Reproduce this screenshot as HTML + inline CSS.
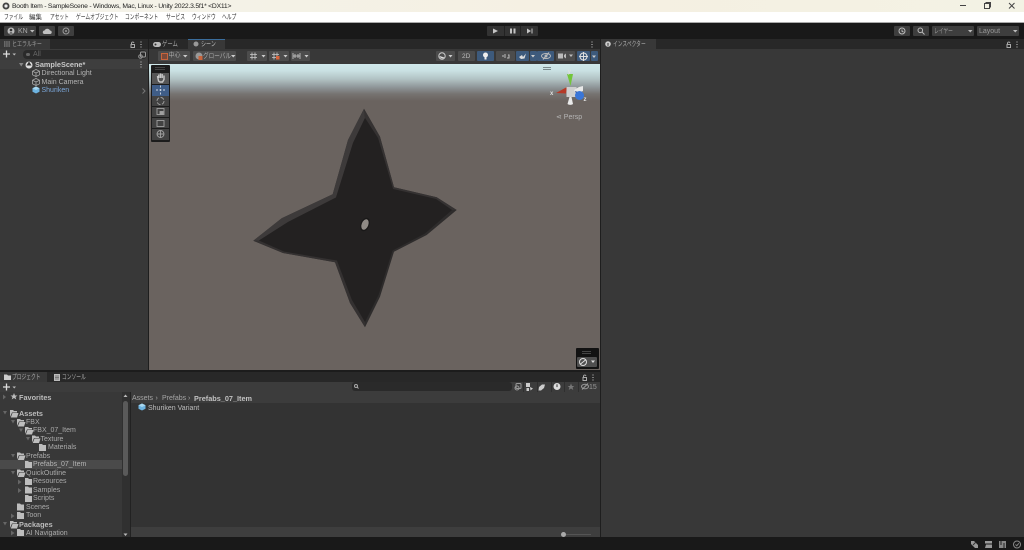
<!DOCTYPE html>
<html><head><meta charset="utf-8">
<style>
html,body{margin:0;padding:0;background:#191919;}
#p{position:relative;width:1024px;height:550px;overflow:hidden;background:#191919;font-family:"Liberation Sans","Noto Sans CJK JP",sans-serif;font-size:7px;color:#c0c0c0;filter:blur(.3px);}
#p div{position:absolute;box-sizing:border-box;}
.t{white-space:nowrap;line-height:9px;height:9px;}
.k{font-size:7px;transform:scaleX(.68);transform-origin:left center;}
.m{color:#333;top:12.500px;}
.b{background:#3e3e3e;border-radius:1px;}
.bl{background:#3d5a7c;border-radius:1px;}
.g{background:#4c4c4c;border-radius:1px;}
svg{position:absolute;overflow:visible;}
</style></head><body>
<div id="p">
<!-- title -->
<div style="left:0;top:0;width:1024px;height:12px;background:linear-gradient(90deg,#f4f3ea,#f5f0e2 60%,#f3f2e4);"></div>
<div class="t" style="left:12px;top:2px;color:#222;font-size:6.800px;letter-spacing:-.23px;">Booth Item - SampleScene - Windows, Mac, Linux - Unity 2022.3.5f1* &lt;DX11&gt;</div>
<svg style="left:2px;top:2px" width="8" height="8"><circle cx="4" cy="4" r="3.500" fill="#444"/><circle cx="4" cy="4" r="1.600" fill="#eee"/></svg>
<svg style="left:955px;top:0" width="69" height="12" stroke="#444" fill="none"><path d="M5 5.500H11"/><path d="M29.500 3.500H34.500V8.500H29.500ZM31 3.500V2.500H35.500V7H34.500"/><path d="M54 3L59.500 8.500M59.500 3L54 8.500"/></svg>
<!-- menu -->
<div style="left:0;top:12px;width:1024px;height:10px;background:#fff;"></div>
<div class="t k m" style="left:4px;">ファイル</div>
<div class="t m" style="left:29px;font-size:6.500px;">編集</div>
<div class="t k m" style="left:50px;">アセット</div>
<div class="t k m" style="left:76px;">ゲームオブジェクト</div>
<div class="t k m" style="left:125px;">コンポーネント</div>
<div class="t k m" style="left:166px;">サービス</div>
<div class="t k m" style="left:192px;">ウィンドウ</div>
<div class="t k m" style="left:222px;">ヘルプ</div>
<div style="left:0;top:22px;width:1024px;height:1px;background:#aaa;"></div>
<!-- toolbar -->
<div style="left:0;top:23px;width:1024px;height:16px;background:#191919;"></div>
<div class="b" style="left:4px;top:26px;width:32px;height:10px;"></div>
<svg style="left:7px;top:27px" width="8" height="8"><circle cx="4" cy="4" r="3.500" fill="#bbb"/><circle cx="4" cy="3" r="1.300" fill="#333"/><path d="M2 6.500Q4 4 6 6.500" fill="#333"/></svg>
<div class="t" style="left:18px;top:26.500px;font-size:7px;color:#aaa;">KN</div>
<svg style="left:30px;top:30px" width="5" height="3"><path d="M0 0H4.500L2.250 2.500Z" fill="#bbb"/></svg>
<div class="b" style="left:39px;top:26px;width:16px;height:10px;"></div>
<svg style="left:42px;top:28px" width="10" height="6"><path d="M2 6H8.500A1.800 1.800 0 0 0 8 2.500A3 3 0 0 0 2.500 2.500A1.800 1.800 0 0 0 2 6Z" fill="#c0c0c0"/></svg>
<div class="b" style="left:58px;top:26px;width:16px;height:10px;"></div>
<svg style="left:62px;top:27px" width="8" height="8"><circle cx="4" cy="4" r="3" fill="none" stroke="#999" stroke-width="1"/><circle cx="4" cy="4" r="1" fill="#999"/></svg>
<div class="b" style="left:487px;top:26px;width:51px;height:10px;background:#333;"></div>
<div style="left:504px;top:26px;width:1px;height:10px;background:#222;"></div>
<div style="left:520px;top:26px;width:1px;height:10px;background:#222;"></div>
<svg style="left:487px;top:26px" width="51" height="10" fill="#c4c4c4"><path d="M6 2.500L11 5L6 7.500Z"/><path d="M23 2.500H25V7.500H23ZM26.500 2.500H28.500V7.500H26.500Z"/><path d="M40 2.500L44 5L40 7.500ZM44.500 2.500H45.500V7.500H44.500Z"/></svg>
<div class="b" style="left:894px;top:26px;width:16px;height:10px;"></div>
<svg style="left:898px;top:27px" width="8" height="8"><circle cx="4" cy="4" r="3" fill="none" stroke="#bbb"/><path d="M4 2.500V4.300L5.500 5" stroke="#bbb" fill="none"/></svg>
<div class="b" style="left:913px;top:26px;width:16px;height:10px;"></div>
<svg style="left:917px;top:27px" width="8" height="8"><circle cx="3.300" cy="3.300" r="2.300" fill="none" stroke="#bbb"/><path d="M5 5L7.500 7.500" stroke="#bbb"/></svg>
<div class="b" style="left:932px;top:26px;width:42px;height:10px;"></div>
<div class="t k" style="left:934px;top:26.500px;color:#999;">レイヤー</div>
<svg style="left:968px;top:30px" width="5" height="3"><path d="M0 0H4.500L2.250 2.500Z" fill="#bbb"/></svg>
<div class="b" style="left:977px;top:26px;width:42px;height:10px;"></div>
<div class="t" style="left:979px;top:26.500px;color:#999;font-size:7px;">Layout</div>
<svg style="left:1013px;top:30px" width="5" height="3"><path d="M0 0H4.500L2.250 2.500Z" fill="#bbb"/></svg>

<!-- Hierarchy -->
<div style="left:0;top:39px;width:148px;height:331px;background:#383838;"></div>
<div style="left:148px;top:39px;width:1px;height:331px;background:#1e1e1e;"></div>
<div style="left:0;top:39px;width:148px;height:10px;background:#282828;"></div>
<div style="left:0;top:39px;width:50px;height:10px;background:#383838;"></div>
<svg style="left:4px;top:41px" width="7" height="6" stroke="#999"><path d="M0 1H6M0 3H6M0 5H6" stroke-dasharray="1.500 .7"/></svg>
<div class="t k" style="left:12px;top:39.500px;color:#999;transform:scaleX(.71);">ヒエラルキー</div>
<svg style="left:130px;top:41px" width="16" height="7"><path d="M1 3.500H4.500V6.500H1ZM1.500 3.500V2A1.300 1.300 0 0 1 4 2" fill="none" stroke="#aaa"/><path d="M11 .5V1.500M11 3V4M11 5.500V6.500" stroke="#ccc" stroke-width="1"/></svg>
<div style="left:0;top:49px;width:148px;height:11px;background:#3c3c3c;"></div>
<svg style="left:3px;top:50px" width="14" height="8"><path d="M0 4H7M3.500 .5V7.500" stroke="#ddd" stroke-width="1.300"/><path d="M9.500 3.500H13L11.250 5.500Z" fill="#bbb"/></svg>
<div style="left:23px;top:50px;width:124px;height:9px;background:#2a2a2a;border-radius:4px;"></div>
<div class="t" style="left:33px;top:50px;color:#666;">All</div>
<div style="left:26px;top:53px;width:4px;height:3px;background:#666;border-radius:2px;"></div>
<svg style="left:138px;top:50.500px" width="8" height="8" fill="none" stroke="#999"><rect x="2.500" y="1" width="5" height="5" rx="1"/><circle cx="2.500" cy="5.500" r="1.800"/></svg>
<div style="left:0;top:60px;width:148px;height:9px;background:#3e3e3e;"></div>
<svg style="left:19px;top:63px" width="5" height="4"><path d="M0 0H4.500L2.250 3.500Z" fill="#888"/></svg>
<svg style="left:25px;top:60.500px" width="8" height="8"><circle cx="4" cy="4" r="3.500" fill="#ddd"/><path d="M4 .5L6.500 4.500H1.500Z" fill="#333"/></svg>
<div class="t" style="left:35px;top:60px;font-weight:bold;color:#c8c8c8;font-size:7.300px;">SampleScene*</div>
<svg style="left:140px;top:61px" width="3" height="7"><path d="M1 .5V1.500M1 3V4M1 5.500V6.500" stroke="#ccc"/></svg>
<svg style="left:32px;top:69px" width="8" height="8" fill="none" stroke="#aaa" stroke-width=".8"><path d="M4 .5L7.500 2.200V5.800L4 7.500L.5 5.800V2.200ZM.5 2.200L4 4L7.500 2.200M4 4V7.500"/></svg>
<div class="t" style="left:41.500px;top:69px;color:#b4b4b4;">Directional Light</div>
<svg style="left:32px;top:77.500px" width="8" height="8" fill="none" stroke="#aaa" stroke-width=".8"><path d="M4 .5L7.500 2.200V5.800L4 7.500L.5 5.800V2.200ZM.5 2.200L4 4L7.500 2.200M4 4V7.500"/></svg>
<div class="t" style="left:41.500px;top:77.500px;color:#b4b4b4;">Main Camera</div>
<svg style="left:32px;top:86px" width="8" height="8"><path d="M4 .5L7.500 2.200V5.800L4 7.500L.5 5.800V2.200Z" fill="#6db3e0"/><path d="M.5 2.200L4 4L7.500 2.200L4 .5Z" fill="#a8d8f0"/></svg>
<div class="t" style="left:41.500px;top:86px;color:#7ba6d8;">Shuriken</div>
<svg style="left:142px;top:87.500px" width="4" height="6"><path d="M.5 .5L3 3L.5 5.500" fill="none" stroke="#777"/></svg>

<!-- Scene tabs -->
<div style="left:149px;top:39px;width:451px;height:10px;background:#282828;"></div>
<div style="left:188px;top:39px;width:37px;height:10px;background:#383838;border-top:1px solid #3a6d9c;"></div>
<svg style="left:153px;top:41.500px" width="8" height="5"><rect width="8" height="5" rx="2.500" fill="#bbb"/><circle cx="2.500" cy="2.500" r="1" fill="#333"/></svg>
<div class="t k" style="left:162px;top:39.500px;color:#aaa;transform:scaleX(.76);">ゲーム</div>
<svg style="left:193px;top:41px" width="6" height="6"><circle cx="3" cy="3" r="2.500" fill="#999"/></svg>
<div class="t k" style="left:201px;top:39.500px;color:#bbb;transform:scaleX(.72);">シーン</div>
<svg style="left:591px;top:41px" width="3" height="7"><path d="M1 .5V1.500M1 3V4M1 5.500V6.500" stroke="#ccc"/></svg>
<!-- Scene toolbar -->
<div style="left:149px;top:49px;width:451px;height:15px;background:#383838;"></div>
<div class="g" style="left:158px;top:51px;width:32px;height:10px;"></div>
<div style="left:161px;top:52.500px;width:7px;height:7px;background:#7a4a3a;border:1px solid #c8643c;"></div>
<div class="t" style="left:168.500px;top:51.500px;color:#aaa;font-size:6px;">中心</div>
<svg style="left:183px;top:55px" width="5" height="3"><path d="M0 0H4.500L2.250 2.500Z" fill="#ccc"/></svg>
<div class="g" style="left:193px;top:51px;width:43px;height:10px;"></div>
<svg style="left:195px;top:52px" width="8" height="8"><circle cx="4" cy="4" r="3.500" fill="#999"/><rect x="3.500" y="4" width="4" height="4" fill="#c8643c"/></svg>
<div class="t k" style="left:203px;top:51.500px;color:#aaa;transform:scaleX(.8);">グローバル</div>
<svg style="left:231px;top:55px" width="5" height="3"><path d="M0 0H4.500L2.250 2.500Z" fill="#ccc"/></svg>
<div class="g" style="left:247px;top:51px;width:20px;height:10px;"></div>
<div class="g" style="left:269px;top:51px;width:20px;height:10px;"></div>
<div class="g" style="left:291px;top:51px;width:19px;height:10px;"></div>
<svg style="left:247px;top:51px" width="64" height="10" fill="none" stroke="#ccc" stroke-width=".8"><path d="M3 3.500H10M3 6.500H10M5 1.500V8.500M8 1.500V8.500"/><path d="M25 3.500H32M25 6.500H32M27 1.500V8.500M30 1.500V8.500"/><rect x="29" y="5" width="3.500" height="3.500" fill="#d8643c" stroke="none"/><path d="M46 2V8M53 2V8M46 5H53M48 3V7M51 3V7"/><path d="M14.500 4H18.500L16.500 6.500Z M36.500 4H40.500L38.500 6.500Z M57.500 4H61.500L59.500 6.500Z" fill="#ccc" stroke="none"/></svg>

<div class="g" style="left:436px;top:51px;width:19px;height:10px;"></div>
<svg style="left:438px;top:52px" width="16" height="8"><circle cx="4" cy="4" r="3.200" fill="none" stroke="#ccc"/><path d="M1.500 4A3 3 0 0 0 6.500 5.500Z" fill="#ddd"/><path d="M10.500 3H14.500L12.500 5.500Z" fill="#ccc"/></svg>
<div class="g" style="left:458px;top:51px;width:17px;height:10px;"></div>
<div class="t" style="left:462px;top:51.500px;color:#bbb;font-size:6.500px;">2D</div>
<div class="bl" style="left:477px;top:51px;width:17px;height:10px;"></div>
<svg style="left:482px;top:52px" width="8" height="8"><circle cx="3.500" cy="3" r="2.500" fill="#eee"/><rect x="2.500" y="5" width="2" height="2.500" fill="#eee"/></svg>
<div class="g" style="left:496px;top:51px;width:19px;height:10px;"></div>
<svg style="left:502px;top:53px" width="8" height="6" fill="none" stroke="#bbb"><path d="M1 2V4M3 1V5M6 2H7V5H5"/></svg>
<div class="bl" style="left:516px;top:51px;width:13px;height:10px;"></div>
<div class="bl" style="left:530px;top:51px;width:7px;height:10px;"></div>
<svg style="left:518px;top:52px" width="18" height="8"><path d="M1 5L4 3L5 5L8 1.500L6.500 6.500L3 7Z" fill="#ddd"/><path d="M13 3H17L15 5.500Z" fill="#ccc"/></svg>
<div class="bl" style="left:537px;top:51px;width:17px;height:10px;"></div>
<svg style="left:541px;top:52px" width="10" height="8" fill="none" stroke="#bbb"><ellipse cx="5" cy="4" rx="4.500" ry="2.500"/><circle cx="5" cy="4" r="1"/><path d="M8 .5L2 7.500"/></svg>
<div class="g" style="left:556px;top:51px;width:19px;height:10px;"></div>
<svg style="left:558px;top:53px" width="16" height="6" fill="#bbb"><rect x="0" y="0.500" width="5" height="5"/><path d="M6 2L8 .5V5.500L6 4Z"/><path d="M11 1.500H15L13 4Z"/></svg>
<div class="bl" style="left:577px;top:51px;width:13px;height:10px;"></div>
<div class="bl" style="left:591px;top:51px;width:7px;height:10px;"></div>
<svg style="left:579px;top:51.500px" width="18" height="9"><circle cx="4.500" cy="4.500" r="3.500" fill="none" stroke="#ddd" stroke-width="1.100"/><path d="M4.500 0V9M0 4.500H9" stroke="#ddd"/><path d="M13 3.500H17L15 6Z" fill="#ccc"/></svg>

<!-- Scene view -->
<div style="left:149px;top:64px;width:451px;height:306px;background:linear-gradient(180deg,#cfe8ea 0,#c9e0e2 7px,#b2c3c4 15px,#90979a 23px,#767371 30px,#6a635f 37px,#6a635f 100%);"></div>
<svg style="left:149px;top:64px" width="451" height="306" viewBox="149 64 451 306">
<path fill="#2e2c2c" d="M364 108.700L380 136.700L394 187.300L436.700 197.300L456.700 210L426.700 235L394 251.700L380 296.700L365 327.300L350 303L335 262.300L283 253L253.300 240.700L281.700 218.300L332.700 194.300L348 140Z"/>
<path fill="#3d3a3a" d="M364 108.700L348 140L332.700 194.300L281.700 218.300L253.300 240.700L259 240.500L288 222L336 197.500L353 143L365 118Z"/>
<path fill="#353232" d="M364 108.700L380 136.700L394 187.300L436.700 197.300L456.700 210L452 210L436 199L393 189L378 138L365 118Z"/>
<path fill="#343131" d="M253.300 240.700L283 253L335 262.300L350 303L365 327.300L365 322L352 300L337 260.500L284 251.500L259 240.500Z"/>
<path fill="#232121" d="M365 118L378 138L393 189L436 199L452 210L425 233.500L392.500 250.500L378.500 295L365 322L352 300L337 260.500L284 251.500L259 240.500L288 222L336 197.500L353 143Z"/>
<ellipse cx="365" cy="224.500" rx="4.500" ry="7" transform="rotate(22 365 224.500)" fill="#191818"/>
<ellipse cx="365" cy="224.500" rx="3.300" ry="5.500" transform="rotate(22 365 224.500)" fill="#8f8a85"/>
<!-- gizmo -->
<g transform="translate(530 60)">
<rect x="13" y="7" width="8" height="1" fill="#7a8a8c"/><rect x="13" y="9" width="8" height="1" fill="#7a8a8c"/>
<path d="M37 14H43L40.500 26Z" fill="#72c53a"/>
<text x="37.600" y="13" font-size="6" font-weight="bold" fill="#e0e0e0" font-family="Liberation Sans">y</text>
<path d="M37 27L26 33L36 33.500Z" fill="#b53a28"/>
<text x="20" y="35" font-size="6" font-weight="bold" fill="#e0e0e0" font-family="Liberation Sans">x</text>
<rect x="36.500" y="27" width="10" height="10" fill="#cfcfcf"/>
<path d="M44 30L49 27L53 26V31L46 34Z" fill="#e8e8e8"/>
<path d="M39.500 37H41.500L43 44A3 1.500 0 0 1 37.500 44Z" fill="#eaeaea"/>
<path d="M45 31L53 34L48 38Z" fill="#1f3f88"/>
<circle cx="49.500" cy="35.500" r="4.500" fill="#3a76d8"/>
<text x="53.500" y="41" font-size="6" font-weight="bold" fill="#e0e0e0" font-family="Liberation Sans">z</text>
</g>
</svg>
<div class="t" style="left:556px;top:113px;color:#b5b5b5;font-size:7px;">⋖ Persp</div>

<!-- left tool palette -->
<div style="left:151px;top:65px;width:19px;height:77px;background:#1c1c1c;border-radius:1px;"></div>
<div style="left:155px;top:67px;width:10px;height:1px;background:#444;"></div>
<div style="left:155px;top:69px;width:10px;height:1px;background:#444;"></div>
<div style="left:152px;top:73px;width:17px;height:11px;background:#565656;"></div>
<div style="left:152px;top:84.500px;width:17px;height:11px;background:#3f5d87;"></div>
<div style="left:152px;top:96px;width:17px;height:10px;background:#424242;"></div>
<div style="left:152px;top:107px;width:17px;height:10px;background:#424242;"></div>
<div style="left:152px;top:118px;width:17px;height:10px;background:#424242;"></div>
<div style="left:152px;top:129px;width:17px;height:11px;background:#424242;"></div>
<svg style="left:152px;top:72px" width="17" height="68" fill="none" stroke="#a0a0a0" stroke-width=".9">
<path d="M5.500 4L6.500 9L8 10H10.500L12 7.500V3.500M6.800 2.500V6M8.500 1.500V6M10.200 2V6" stroke="#c8c8c8" stroke-width="1.400"/>
<path d="M8.500 13.500V22.500M4 18H13" stroke="#cfd8e4" stroke-dasharray="2 1.500"/>
<circle cx="8.500" cy="29" r="3.500" stroke-dasharray="4 1.500"/>
<rect x="5" y="36.500" width="7" height="6"/><rect x="8" y="39.500" width="3" height="3" fill="#a0a0a0"/>
<rect x="5" y="48.500" width="7" height="6"/>
<circle cx="8.500" cy="62" r="3.500"/><path d="M5 62H12M8.500 58.500V65.500"/>
</svg>
<!-- bottom-right overlay -->
<div style="left:576px;top:348px;width:23px;height:21px;background:#121212;border-radius:1px;"></div>
<div style="left:582px;top:351px;width:9px;height:1px;background:#444;"></div>
<div style="left:582px;top:353px;width:9px;height:1px;background:#444;"></div>
<div style="left:577px;top:357px;width:20px;height:10px;background:#4f4f4f;border-radius:1px;"></div>
<svg style="left:579px;top:358px" width="18" height="8"><circle cx="4" cy="4" r="3.500" fill="none" stroke="#ddd"/><path d="M1.500 6L6.500 2" stroke="#ddd"/><path d="M12 2.500H16L14 5Z" fill="#ddd"/></svg>

<!-- Inspector -->
<div style="left:600px;top:39px;width:424px;height:498px;background:#383838;"></div>
<div style="left:600px;top:39px;width:1px;height:498px;background:#1e1e1e;"></div>
<div style="left:601px;top:39px;width:423px;height:10px;background:#282828;"></div>
<div style="left:601px;top:39px;width:55px;height:10px;background:#383838;"></div>
<svg style="left:605px;top:41px" width="6" height="6"><circle cx="3" cy="3" r="2.800" fill="#ccc"/><rect x="2.500" y="2" width="1" height="2.800" fill="#333"/></svg>
<div class="t k" style="left:613px;top:39.500px;color:#aaa;">インスペクター</div>
<svg style="left:1006px;top:41px" width="16" height="7"><path d="M1 3.500H4.500V6.500H1ZM1.500 3.500V2A1.300 1.300 0 0 1 4 2" fill="none" stroke="#aaa"/><path d="M11 .5V1.500M11 3V4M11 5.500V6.500" stroke="#ccc" stroke-width="1"/></svg>

<!-- Project -->
<div style="left:0;top:370px;width:600px;height:2px;background:#1c1c1c;"></div>
<div style="left:0;top:372px;width:600px;height:10px;background:#282828;"></div>
<div style="left:0;top:372px;width:47px;height:10px;background:#383838;"></div>
<svg style="left:4px;top:374px" width="7" height="6"><path d="M0 .5H3L4 1.500H7V6H0Z" fill="#ccc"/></svg>
<div class="t k" style="left:12px;top:372.500px;color:#aaa;">プロジェクト</div>
<svg style="left:54px;top:373.500px" width="6" height="7"><rect width="6" height="7" fill="#bbb"/><path d="M1 2H5M1 3.500H5M1 5H5" stroke="#333" stroke-width=".6"/></svg>
<div class="t k" style="left:62px;top:372.500px;color:#aaa;">コンソール</div>
<svg style="left:582px;top:374px" width="16" height="7"><path d="M1 3.500H4.500V6.500H1ZM1.500 3.500V2A1.300 1.300 0 0 1 4 2" fill="none" stroke="#aaa"/><path d="M11 .5V1.500M11 3V4M11 5.500V6.500" stroke="#ccc" stroke-width="1"/></svg>
<div style="left:0;top:382px;width:600px;height:10px;background:#3c3c3c;"></div>
<svg style="left:3px;top:382.500px" width="14" height="8"><path d="M0 4H7M3.500 .5V7.500" stroke="#ddd" stroke-width="1.300"/><path d="M9.500 3.500H13L11.250 5.500Z" fill="#bbb"/></svg>
<div style="left:352px;top:382px;width:160px;height:9px;background:#2a2a2a;border-radius:3px;"></div>
<svg style="left:353.500px;top:384px" width="5" height="5"><circle cx="2" cy="2" r="1.500" fill="none" stroke="#aaa"/><path d="M3 3L4.500 4.500" stroke="#aaa"/></svg>
<svg style="left:512px;top:382px" width="88" height="10"><rect x="4" y="1.500" width="5" height="5" rx="1" fill="none" stroke="#999"/><circle cx="5" cy="6" r="2" fill="none" stroke="#999"/>
<rect x="11" y="0" width="1" height="10" fill="#2f2f2f"/><rect x="25" y="0" width="1" height="10" fill="#2f2f2f"/><rect x="39" y="0" width="1" height="10" fill="#2f2f2f"/><rect x="52" y="0" width="1" height="10" fill="#2f2f2f"/><rect x="66" y="0" width="1" height="10" fill="#2f2f2f"/>
<path d="M14 1H18V5H14ZM18 5L21 6.500L18.500 8.500ZM14.500 6H17V9H14.500Z" fill="#ccc"/><path d="M27 5L30 2.500H33L32 6L29 8.500H26.500Z" fill="#ccc"/><circle cx="45" cy="4.500" r="3.500" fill="#ddd"/><rect x="44.500" y="2.300" width="1" height="2.800" fill="#333"/><path d="M59 1.500L60 4H62.300L60.500 5.500L61.300 8L59 6.500L56.700 8L57.500 5.500L55.700 4H58Z" fill="#777"/><ellipse cx="73" cy="4.500" rx="3.500" ry="2.300" fill="none" stroke="#999"/><path d="M76 1.500L70 7.500" stroke="#999"/></svg>
<div class="t" style="left:589px;top:382.500px;color:#999;font-size:7px;">15</div>

<div style="left:0;top:392px;width:130px;height:145px;background:#383838;"></div>
<div style="left:122px;top:392px;width:8px;height:145px;background:#303030;"></div>
<div style="left:123px;top:401px;width:5px;height:75px;background:#5a5a5a;border-radius:3px;"></div>
<svg style="left:123px;top:394px" width="6" height="4"><path d="M.5 3H4.500L2.500 .5Z" fill="#bbb"/></svg>
<svg style="left:123px;top:532.500px" width="6" height="4"><path d="M.5 .5H4.500L2.500 3Z" fill="#bbb"/></svg>
<div style="left:0;top:460px;width:122px;height:9px;background:#4a4a4a;"></div>
<div style="left:130px;top:392px;width:1px;height:145px;background:#222;"></div>
<div style="left:131px;top:392px;width:469px;height:11px;background:#3c3c3c;"></div>
<div style="left:131px;top:403px;width:469px;height:124px;background:#333;"></div>
<div style="left:131px;top:527px;width:469px;height:10px;background:#3e3e3e;"></div>
<div class="t" style="left:132px;top:393.500px;color:#a5a5a5;">Assets</div>
<div class="t" style="left:155.500px;top:393.500px;color:#a5a5a5;">›</div>
<div class="t" style="left:162px;top:393.500px;color:#a5a5a5;">Prefabs</div>
<div class="t" style="left:188px;top:393.500px;color:#a5a5a5;">›</div>
<div class="t" style="left:194px;top:393.500px;color:#c2c2c2;font-weight:bold;font-size:7.300px;">Prefabs_07_Item</div>
<svg style="left:138px;top:403px" width="8" height="8"><path d="M4 .5L7.500 2.200V5.800L4 7.500L.5 5.800V2.200Z" fill="#6db3e0"/><path d="M.5 2.200L4 4L7.500 2.200L4 .5Z" fill="#a8d8f0"/></svg>
<div class="t" style="left:148px;top:403.500px;color:#bcbcbc;">Shuriken Variant</div>
<div style="left:561px;top:532px;width:5px;height:5px;background:#aaa;border-radius:50%;"></div>
<div style="left:566px;top:533.500px;width:25px;height:1.500px;background:#555;"></div>

<!-- tree -->
<svg style="left:0;top:392px" width="122" height="145" fill="#bdbdbd">
<path d="M3 2.500L6 5L3 7.500Z" fill="#666"/>
<path d="M14 1L15 3.500H17.500L15.500 5L16.300 7.500L14 6L11.700 7.500L12.500 5L10.500 3.500H13Z"/>
<path d="M3 19H7L5 22.500Z M11 28H15L13 31.500Z M19 36.500H23L21 40Z M26 45H30L28 48.500Z M11 62H15L13 65.500Z M11 79H15L13 82.500Z M3 130H7L5 133.500Z" fill="#666"/>
<path d="M18 87.500L21.500 90L18 92.500Z M18 96L21.500 98.500L18 101Z M11 121.500L14.500 124L11 126.500Z M11 138.500L14.500 141L11 143.500Z" fill="#666"/>
<path d="M10 18H13L14 19H17V20.500H12L10 25ZM12.500 21H18.500L17 25.500H10.800Z"/>
<path d="M17 27H20L21 28H24V29.500H19L17 34ZM19.500 30H25.500L24 34.500H17.800Z"/>
<path d="M25 35H28L29 36H32V37.500H27L25 42ZM27.500 38H33.500L32 42.500H25.800Z"/>
<path d="M32 43.500H35L36 44.500H39V46H34L32 50.500ZM34.500 46.500H40.500L39 51H32.800Z"/>
<path d="M17 60.500H20L21 61.500H24V63H19L17 67.500ZM19.500 63.500H25.500L24 68H17.800Z"/>
<path d="M17 77.500H20L21 78.500H24V80H19L17 84.500ZM19.500 80.500H25.500L24 85H17.800Z"/>
<path d="M10 129H13L14 130H17V131.500H12L10 136ZM12.500 132H18.500L17 136.500H10.800Z"/>
<path d="M39 52H42L43 53H46V59H39Z"/>
<path d="M25 69H28L29 70H32V76H25Z"/>
<path d="M25 86H28L29 87H32V93H25Z"/>
<path d="M25 94.500H28L29 95.500H32V101.500H25Z"/>
<path d="M25 103H28L29 104H32V110H25Z"/>
<path d="M17 111.500H20L21 112.500H24V118.500H17Z"/>
<path d="M17 120H20L21 121H24V127H17Z"/>
<path d="M17 137H20L21 138H24V144H17Z"/>
</svg>
<div class="t" style="left:19px;top:392.500px;font-weight:bold;color:#bcbcbc;font-size:7.300px;">Favorites</div>
<div class="t" style="left:19px;top:409px;font-weight:bold;color:#bcbcbc;font-size:7.300px;">Assets</div>
<div class="t" style="left:26px;top:417.500px;color:#aaa;">FBX</div>
<div class="t" style="left:33px;top:426px;color:#aaa;">FBX_07_Item</div>
<div class="t" style="left:40.500px;top:434.500px;color:#aaa;">Texture</div>
<div class="t" style="left:48px;top:443px;color:#aaa;">Materials</div>
<div class="t" style="left:26px;top:451.500px;color:#aaa;">Prefabs</div>
<div class="t" style="left:33px;top:460px;color:#b4b4b4;">Prefabs_07_Item</div>
<div class="t" style="left:26px;top:468.500px;color:#aaa;">QuickOutline</div>
<div class="t" style="left:33px;top:477px;color:#aaa;">Resources</div>
<div class="t" style="left:33px;top:485.500px;color:#aaa;">Samples</div>
<div class="t" style="left:33px;top:494px;color:#aaa;">Scripts</div>
<div class="t" style="left:26px;top:502.500px;color:#aaa;">Scenes</div>
<div class="t" style="left:26px;top:511px;color:#aaa;">Toon</div>
<div class="t" style="left:19px;top:519.500px;font-weight:bold;color:#bcbcbc;font-size:7.300px;">Packages</div>
<div class="t" style="left:26px;top:528.500px;color:#aaa;">AI Navigation</div>

<!-- status bar -->
<div style="left:0;top:537px;width:1024px;height:13px;background:#191919;"></div>
<svg style="left:970px;top:540px" width="52" height="9"><path d="M1 1L4 1L8 5V8H5L1 4Z" fill="#999"/><path d="M3 5L6 2" stroke="#333"/><path d="M15 1H22V3.500H15ZM16 4.500H22V8H15Z" fill="#999"/><path d="M29 1H36V8H29Z" fill="#888"/><path d="M31 1V5M34 3V8" stroke="#222"/><circle cx="47" cy="4.500" r="3.500" fill="none" stroke="#888"/><path d="M45.500 4.500L46.800 5.800L48.800 3.300" fill="none" stroke="#888"/></svg>
</div>
</body></html>
